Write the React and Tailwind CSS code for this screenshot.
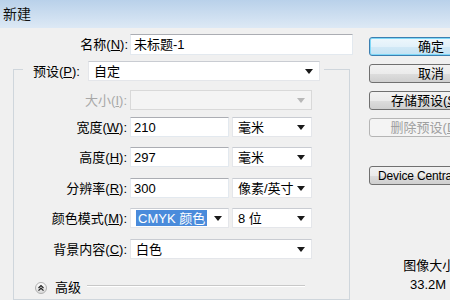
import React from "react";

function Arrow({ disabled }) {
  return (
    <svg width="8" height="5" viewBox="0 0 8 5" className="shrink-0">
      <polygon points="0,0 8,0 4,5" fill={disabled ? "#b8b8b8" : "#1a1a1a"} />
    </svg>
  );
}

function Select({ className, children, disabled }) {
  return (
    <div
      className={`h-[20px] shrink-0 flex items-center pl-[5px] pr-[6px] border ${
        disabled
          ? "bg-[#f4f4f4] border-[#d9d9d9]"
          : "bg-white border-[#e4e6ea] border-t-[#c9ccd2]"
      } ${className}`}
    >
      <div className="flex-1 min-w-0 flex items-center whitespace-nowrap">{children}</div>
      <Arrow disabled={disabled} />
    </div>
  );
}

function TextBox({ className, children }) {
  return (
    <div
      className={`h-[20px] shrink-0 flex items-center pl-[3px] bg-white border border-[#e3e9ef] border-t-[#abadb3] whitespace-nowrap ${className}`}
    >
      {children}
    </div>
  );
}

function Label({ children, disabled }) {
  return (
    <div
      className={`w-[116px] shrink-0 pr-[3px] text-right whitespace-nowrap ${
        disabled ? "text-[#a8a8a8]" : "text-black"
      }`}
    >
      {children}
    </div>
  );
}

function Btn({ children, kind, className }) {
  const base =
    "h-[19px] w-[124px] shrink-0 rounded-[3px] border flex items-center whitespace-nowrap";
  if (kind === "default")
    return (
      <div
        className={`${base} justify-center border-[#3c7fb1] bg-[linear-gradient(#eef7fc_0%,#e2f1fa_50%,#d2e9f6_51%,#c4e2f3_100%)] shadow-[inset_0_0_0_1px_#7fd8f7] ${className}`}
      >
        {children}
      </div>
    );
  if (kind === "disabled")
    return (
      <div
        className={`${base} justify-center border-[#b5b5b5] bg-[#f4f4f4] text-[#a0a0a0] ${className}`}
      >
        {children}
      </div>
    );
  if (kind === "left")
    return (
      <div
        className={`${base} justify-start border-[#707070] bg-[linear-gradient(#f2f2f2_0%,#ebebeb_50%,#dddddd_51%,#cfcfcf_100%)] ${className}`}
      >
        {children}
      </div>
    );
  return (
    <div
      className={`${base} justify-center border-[#707070] bg-[linear-gradient(#f2f2f2_0%,#ebebeb_50%,#dddddd_51%,#cfcfcf_100%)] ${className}`}
    >
      {children}
    </div>
  );
}

export default function App() {
  return (
    <div className="w-[450px] h-[300px] overflow-hidden bg-[#f0f0f0] text-[13px] text-black leading-none font-['Liberation_Sans','Noto_Sans_CJK_SC',sans-serif] flex flex-col">
      <div className="h-[28px] shrink-0 bg-gradient-to-b from-[#b9d1ea] to-[#dde9f5] flex items-center pl-[3px] pb-[1px] text-[14px] text-[#111]">
        新建
      </div>
      <div className="flex flex-1 min-h-0">
        {/* left form */}
        <div className="w-[369px] shrink-0 flex flex-col">
          <div className="mt-[6px] flex items-center">
            <div className="w-[130px] shrink-0 pr-[2px] text-right">
              名称(<u>N</u>):
            </div>
            <TextBox className="w-[223px] h-[21px]">未标题-1</TextBox>
          </div>

          <fieldset className="mt-[6px] ml-[13px] w-[337px] h-[260px] border border-[#cfd6dc] m-0 p-0">
            <legend className="ml-[9px] pl-[10px] pr-[4px] h-[16px] p-0">
              <div className="flex items-start">
                <div className="w-[55px] h-[20px] shrink-0 flex items-center">
                  预设(<u>P</u>):
                </div>
                <Select className="w-[232px]">自定</Select>
              </div>
            </legend>

            <div className="mt-[13px] flex items-center">
              <Label disabled>大小(<u>I</u>):</Label>
              <Select className="w-[182px]" disabled></Select>
            </div>

            <div className="mt-[7px] flex items-center">
              <Label>宽度(<u>W</u>):</Label>
              <TextBox className="w-[99px]">210</TextBox>
              <Select className="w-[80px] ml-[3px]">毫米</Select>
            </div>

            <div className="mt-[10px] flex items-center">
              <Label>高度(<u>H</u>):</Label>
              <TextBox className="w-[99px]">297</TextBox>
              <Select className="w-[80px] ml-[3px]">毫米</Select>
            </div>

            <div className="mt-[11px] flex items-center">
              <Label>分辨率(<u>R</u>):</Label>
              <TextBox className="w-[99px]">300</TextBox>
              <Select className="w-[80px] ml-[3px] pl-[4px]">像素/英寸</Select>
            </div>

            <div className="mt-[10px] flex items-center">
              <Label>颜色模式(<u>M</u>):</Label>
              <Select className="w-[99px] pl-[2px]">
                <span className="h-[16px] px-[2px] flex items-center bg-[#4a8bdb] text-white">
                  CMYK 颜色
                </span>
              </Select>
              <Select className="w-[80px] ml-[3px]">8 位</Select>
            </div>

            <div className="mt-[11px] flex items-center">
              <Label>背景内容(<u>C</u>):</Label>
              <Select className="w-[182px]">白色</Select>
            </div>

            <div className="mt-[22px] flex items-center pl-[21px]">
              <svg width="12" height="12" viewBox="0 0 12 12" className="shrink-0">
                <defs>
                  <linearGradient id="g" x1="0" y1="0" x2="0" y2="1">
                    <stop offset="0" stopColor="#ffffff" />
                    <stop offset="1" stopColor="#d8d8d8" />
                  </linearGradient>
                </defs>
                <circle cx="6" cy="6" r="5.5" fill="url(#g)" stroke="#b0b0b0" />
                <polyline points="3.5,6 6,3.6 8.5,6" fill="none" stroke="#222" strokeWidth="1.2" />
                <polyline points="3.5,8.6 6,6.2 8.5,8.6" fill="none" stroke="#222" strokeWidth="1.2" />
              </svg>
              <span className="ml-[8px]">高级</span>
              <div className="ml-[6px] mb-[3px] w-[218px] h-[2px] border-t border-t-[#c8c8c8] border-b border-b-white" />
            </div>
          </fieldset>
        </div>

        {/* right buttons */}
        <div className="w-[124px] shrink-0 flex flex-col items-center">
          <Btn kind="default" className="mt-[9px]">确定</Btn>
          <Btn className="mt-[8px]">取消</Btn>
          <Btn className="mt-[8px]">存储预设(<u>S</u>)...</Btn>
          <Btn kind="disabled" className="mt-[8px]">删除预设(<u>D</u>)...</Btn>
          <Btn kind="left" className="mt-[29px] pl-[8px] text-[12px] tracking-[-0.15px]">
            Device Central...
          </Btn>
          <div className="mt-[74px] text-center">图像大小:</div>
          <div className="mt-[6px] text-center pr-[6px]">33.2M</div>
        </div>
      </div>
    </div>
  );
}
